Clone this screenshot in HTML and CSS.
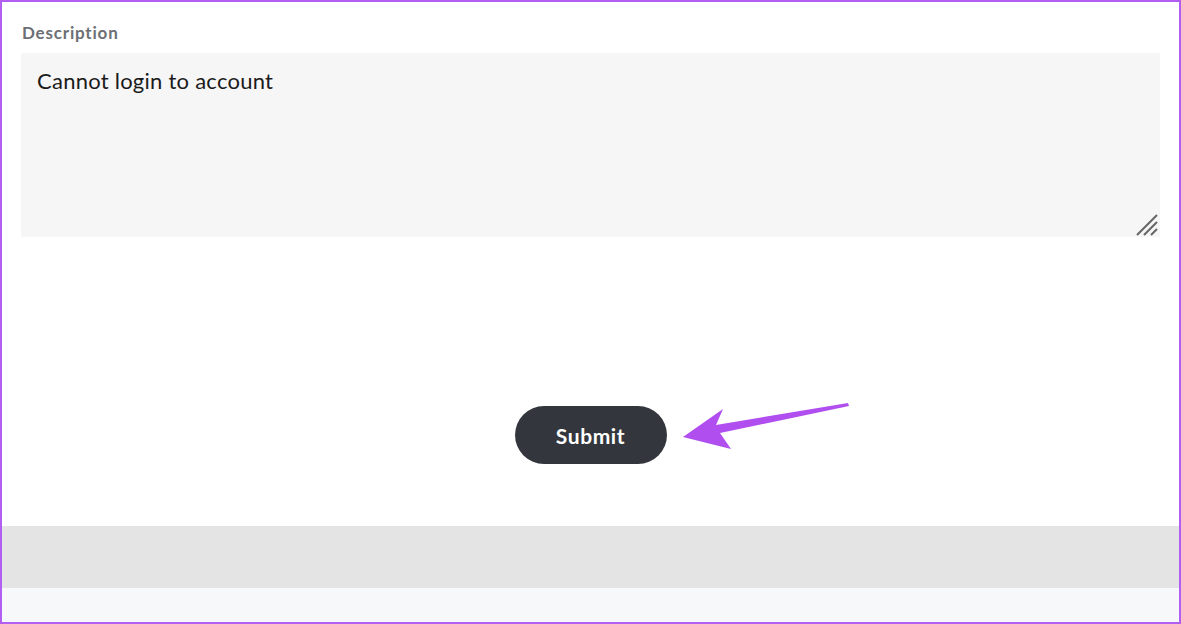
FILE: index.html
```html
<!DOCTYPE html>
<html lang="en">
<head>
<meta charset="utf-8">
<title>Description</title>
<link rel="stylesheet" href="styles.css">
</head>
<body>
<div class="frame">
  <main class="form">
    <label class="label" for="desc">Description</label>
    <div class="field">
      <div class="textarea" id="desc">Cannot login to account</div>
      <svg class="grip" width="22" height="22" viewBox="0 0 22 22">
        <path d="M1 21 L21 1 M8 21 L21 8 M15 21 L21 15" stroke="#666" stroke-width="2" fill="none"/>
      </svg>
    </div>
    <div class="actions">
      <button class="submit" type="button">Submit</button>
      <svg class="arrow" width="180" height="50" viewBox="0 0 180 50">
        <polygon points="3,36 43,8 36,24 168,2 169,5 40,32 51,48" fill="#b04ef0"/>
      </svg>
    </div>
  </main>
  <div class="band"></div>
  <div class="footer"></div>
</div>
</body>
</html>
```
FILE: styles.css
```css
* { box-sizing: border-box; }
html, body { margin: 0; padding: 0; background: #fff; }
body { font-family: Lato, "Noto Sans", sans-serif; }
.frame {
  width: 1181px;
  height: 624px;
  border: 2px solid #b35ef2;
  display: flex;
  flex-direction: column;
  overflow: hidden;
}
.form {
  flex: 0 0 524px;
  padding: 20px 19px 0 19px;
  display: flex;
  flex-direction: column;
}
.label {
  font-size: 17px;
  font-weight: 700;
  color: #6c7075;
  line-height: 22px;
  height: 22px;
  margin-left: 1px;
  letter-spacing: 0.8px;
}
.field {
  position: relative;
  margin-top: 9px;
  height: 184px;
  background: #f6f6f6;
}
.textarea {
  padding: 15px 16px;
  font-size: 22px;
  line-height: 26px;
  color: #1b1b1b;
  letter-spacing: 0.25px;
}
.grip {
  position: absolute;
  right: 2px;
  bottom: 1px;
}
.actions {
  position: relative;
  margin-top: 169px;
  display: flex;
  justify-content: center;
}
.submit {
  width: 152px;
  height: 58px;
  border: none;
  border-radius: 29px;
  background: #33373d;
  color: #fff;
  font-family: Lato, "Noto Sans", sans-serif;
  font-size: 21px;
  font-weight: 700;
  letter-spacing: 0.6px;
  padding: 0;
}
.arrow {
  position: absolute;
  left: 659px;
  top: -5px;
}
.band {
  flex: 0 0 62px;
  background: #e4e4e4;
}
.footer {
  flex: 1;
  background: #f7f8fa;
}
```
